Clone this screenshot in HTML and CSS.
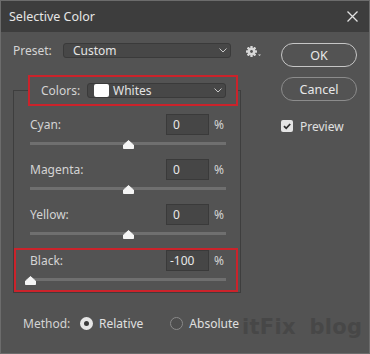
FILE: index.html
```html
<html lang="en">
<head>
    <meta charset="UTF-8">
    <meta name="viewport" content="width=device-width, initial-scale=1.0">
    <title>Selective Color</title>

    <link rel="stylesheet" href="styles.css">
</head>
<body>
    <div class="dialog">
        <header class="titlebar">
            <span class="title">Selective Color</span>
            <svg class="close" width="11" height="11" viewBox="0 0 11 11">
                <path d="M0.5 0.5 L10.5 10.5 M10.5 0.5 L0.5 10.5" stroke="#e2e2e2" stroke-width="1.3"/>
            </svg>
        </header>

        <div class="main">
            <div class="left">
                <div class="preset-row">
                    <span class="preset-label">Preset:</span>
                    <div class="select preset-select">
                        <span>Custom</span>
                        <svg class="chev" width="8" height="5" viewBox="0 0 8 5"><path d="M0.5 0.5 L4 4 L7.5 0.5" fill="none" stroke="#c8c8c8"/></svg>
                    </div>
                    <svg class="gear" width="16" height="12" viewBox="0 0 16 12">
                        <g fill="#d8d8d8">
                            <rect x="4.3" y="0" width="2.4" height="11" rx="0.5"/>
                            <rect x="4.3" y="0" width="2.4" height="11" rx="0.5" transform="rotate(45 5.5 5.5)"/>
                            <rect x="4.3" y="0" width="2.4" height="11" rx="0.5" transform="rotate(90 5.5 5.5)"/>
                            <rect x="4.3" y="0" width="2.4" height="11" rx="0.5" transform="rotate(135 5.5 5.5)"/>
                            <circle cx="5.5" cy="5.5" r="3.8"/>
                        </g>
                        <circle cx="5.5" cy="5.5" r="1.4" fill="#535353"/>
                        <path d="M12 8.5 H15 L13.5 10 Z" fill="#d8d8d8"/>
                    </svg>
                </div>

                <fieldset class="group">
                    <legend class="colors">
                        <div class="colors-row">
                            <span class="colors-label">Colors:</span>
                            <div class="select colors-select">
                                <span class="swatch"></span>
                                <span>Whites</span>
                                <svg class="chev" width="8" height="5" viewBox="0 0 8 5"><path d="M0.5 0.5 L4 4 L7.5 0.5" fill="none" stroke="#c8c8c8"/></svg>
                            </div>
                        </div>
                    </legend>

                    <div class="row first">
                        <div class="row-top">
                            <span class="row-label">Cyan:</span>
                            <span class="num">0</span>
                            <span class="pct">%</span>
                        </div>
                        <div class="track">
                            <svg class="thumb" style="left: 50%" width="11" height="9" viewBox="0 0 11 9"><path d="M0.5 8.5 V5 L5.5 0.5 L10.5 5 V8.5 Z" fill="#f4f4f4" stroke="#f4f4f4" stroke-linejoin="round"/></svg>
                        </div>
                    </div>

                    <div class="row">
                        <div class="row-top">
                            <span class="row-label">Magenta:</span>
                            <span class="num">0</span>
                            <span class="pct">%</span>
                        </div>
                        <div class="track">
                            <svg class="thumb" style="left: 50%" width="11" height="9" viewBox="0 0 11 9"><path d="M0.5 8.5 V5 L5.5 0.5 L10.5 5 V8.5 Z" fill="#f4f4f4" stroke="#f4f4f4" stroke-linejoin="round"/></svg>
                        </div>
                    </div>

                    <div class="row">
                        <div class="row-top">
                            <span class="row-label">Yellow:</span>
                            <span class="num">0</span>
                            <span class="pct">%</span>
                        </div>
                        <div class="track">
                            <svg class="thumb" style="left: 50%" width="11" height="9" viewBox="0 0 11 9"><path d="M0.5 8.5 V5 L5.5 0.5 L10.5 5 V8.5 Z" fill="#f4f4f4" stroke="#f4f4f4" stroke-linejoin="round"/></svg>
                        </div>
                    </div>

                    <div class="row marked">
                        <div class="row-top">
                            <span class="row-label">Black:</span>
                            <span class="num neg">-100</span>
                            <span class="pct">%</span>
                        </div>
                        <div class="track">
                            <svg class="thumb" style="left: 0%" width="11" height="9" viewBox="0 0 11 9"><path d="M0.5 8.5 V5 L5.5 0.5 L10.5 5 V8.5 Z" fill="#f4f4f4" stroke="#f4f4f4" stroke-linejoin="round"/></svg>
                        </div>
                    </div>
                </fieldset>

                <div class="method-row">
                    <span class="method-label">Method:</span>
                    <span class="option relative"><span class="radio on"></span>Relative</span>
                    <span class="option"><span class="radio"></span>Absolute</span>
                </div>
            </div>

            <div class="right">
                <button class="btn ok">OK</button>
                <button class="btn cancel">Cancel</button>
                <div class="preview">
                    <span class="check">
                        <svg width="12" height="12" viewBox="0 0 12 12"><path d="M3 6.2 L5.2 8.3 L9.2 4" fill="none" stroke="#2e2e2e" stroke-width="1.8"/></svg>
                    </span>
                    <span>Preview</span>
                </div>
            </div>
        </div>

        <div class="watermark">itFix blog</div>
    </div>
</body>
</html>
```

FILE: styles.css
```css
body{
    margin: 0;
    background: #535353;
    font-family: "Noto Sans", "Liberation Sans", sans-serif;
    font-size: 12px;
    color: #d4d4d4;
}
.dialog{
    position: relative;
    width: 370px;
    height: 354px;
    box-sizing: border-box;
    border: 1px solid #6c6c6c;
    background: #535353;
    overflow: hidden;
}
.titlebar{
    height: 31px;
    background: #3d3d3d;
    display: flex;
    align-items: center;
    justify-content: space-between;
    padding: 0 11px 0 8px;
}
.title{
    font-size: 12.5px;
    color: #e6e6e6;
}
.main{
    display: flex;
    padding-top: 11px;
}
.left{
    width: 258px;
    padding-left: 12px;
}
.preset-row{
    display: flex;
    align-items: center;
    height: 15px;
}
.preset-label{
    width: 50px;
}
.select{
    box-sizing: border-box;
    height: 15px;
    display: flex;
    align-items: center;
    background: #474747;
    border: 1px solid #3a3a3a;
    border-radius: 3px;
    color: #e4e4e4;
}
.select .chev{
    margin-left: auto;
    margin-right: 3px;
}
.preset-select{
    width: 168px;
    padding-left: 9px;
}
.gear{
    margin-left: 15px;
    margin-top: 3px;
}
.group{
    width: 228px;
    box-sizing: border-box;
    margin: 17px 0 0 0;
    padding: 0;
    border: 1px solid #3e3e3e;
    min-width: 0;
}
.colors{
    width: 210px;
    height: 31px;
    box-sizing: border-box;
    margin-left: 14px;
    padding: 0;
    border: 2px solid #cb232b;
}
.colors-row{
    display: flex;
    align-items: center;
    height: 27px;
    padding: 0 10px 0 11px;
}
.colors-label{
    width: 46px;
}
.colors-select{
    flex: 1;
    padding-left: 6px;
}
.swatch{
    width: 15px;
    height: 13px;
    background: #ffffff;
    border-radius: 2px;
    margin-right: 4px;
}
.row{
    margin: 14px 14px 0 16px;
}
.row.first{
    margin-top: 8px;
}
.row.marked{
    margin: 13px 2px 0 0;
    border: 2px solid #cb232b;
    padding: 0 10px 9px 14px;
}
.row-top{
    display: flex;
    align-items: center;
    height: 21px;
}
.row-label{
    flex: 1;
}
.num{
    box-sizing: border-box;
    width: 43px;
    height: 21px;
    display: flex;
    align-items: center;
    padding-left: 6px;
    background: #464646;
    border: 1px solid #3a3a3a;
    color: #e8e8e8;
}
.num.neg{
    padding-left: 3px;
}
.pct{
    width: 17px;
    padding-left: 5px;
    box-sizing: border-box;
}
.track{
    position: relative;
    height: 3px;
    margin-top: 7px;
    background: #6f6f6f;
}
.thumb{
    position: absolute;
    top: -2px;
    margin-left: -5.5px;
}
.method-row{
    display: flex;
    align-items: center;
    height: 16px;
    margin-top: 22px;
    padding-left: 10px;
}
.method-label{
    width: 57px;
}
.option{
    display: flex;
    align-items: center;
    gap: 6px;
    color: #e0e0e0;
}
.option.relative{
    margin-right: 27px;
}
.radio{
    width: 13px;
    height: 13px;
    box-sizing: border-box;
    border-radius: 50%;
    border: 1px solid #8a8a8a;
    background: #4e4e4e;
}
.radio.on{
    border: 4px solid #e6e6e6;
    background: #3a3a3a;
}
.right{
    margin-left: 10px;
    width: 76px;
    display: flex;
    flex-direction: column;
}
.btn{
    height: 24px;
    padding: 0;
    border: 1px solid #c6c6c6;
    border-radius: 12px;
    background: transparent;
    color: #e8e8e8;
    font: inherit;
    font-size: 12.5px;
}
.btn.cancel{
    margin-top: 10px;
    border-color: #8c8c8c;
}
.preview{
    display: flex;
    align-items: center;
    gap: 7px;
    height: 12px;
    margin-top: 19px;
    color: #e0e0e0;
}
.check{
    width: 12px;
    height: 12px;
    border-radius: 2px;
    background: #e4e4e4;
}
.check svg{
    display: block;
}
.watermark{
    position: absolute;
    left: 241px;
    top: 316px;
    white-space: nowrap;
    font-family: "DejaVu Sans", sans-serif;
    font-weight: bold;
    font-size: 21px;
    line-height: 21px;
    letter-spacing: 0.3px;
    word-spacing: 6px;
    color: #474747;
}
```
